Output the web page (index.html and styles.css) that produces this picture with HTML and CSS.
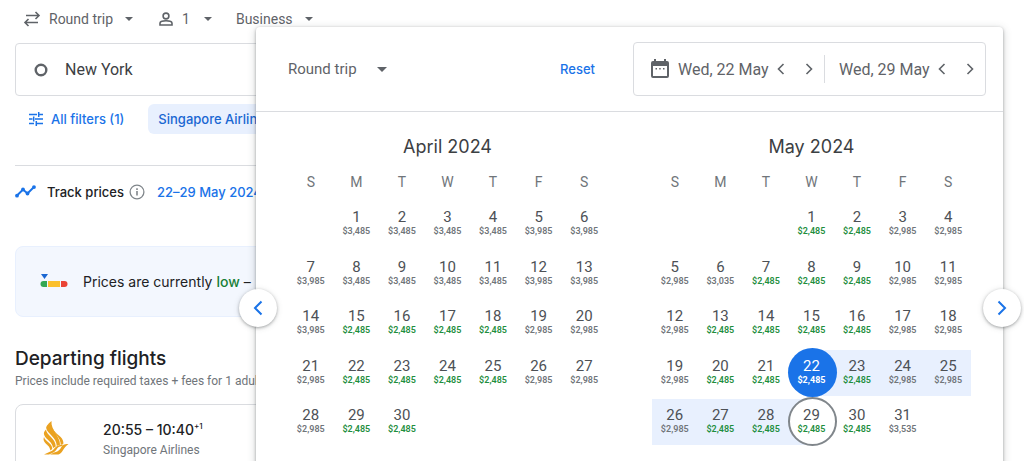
FILE: index.html
```html
<!DOCTYPE html>
<html lang="en">
<head>
<meta charset="utf-8">
<meta name="viewport" content="width=device-width, initial-scale=1">
<title>Flights</title>
<link rel="stylesheet" href="styles.css">
<script src="calendar.js" defer></script>
</head>
<body>
<main class="page">
  <div class="trip-bar">
    <label class="picker picker-trip">
      <svg class="icon-swap" width="18" height="16" viewBox="0 0 18 16" fill="none" stroke="currentColor" stroke-width="1.6"><path d="M3 4.5h13M12.5 1l3.5 3.5L12.500 8M15 11.500H2M5.500 8L2 11.500 5.500 15"/></svg>
      <select class="picker-select" aria-label="Trip type"><option>Round trip</option></select>
      <svg class="caret" width="8" height="4" viewBox="0 0 8 4"><path d="M0 0h8L4 4z" fill="currentColor"/></svg>
    </label>
    <label class="picker picker-people">
      <svg width="14" height="14" viewBox="0 0 14 14" fill="none" stroke="currentColor" stroke-width="1.600"><circle cx="7" cy="4" r="2.900"/><path d="M1 13v-1.800C1 9.400 4.500 8.700 7 8.700s6 .7 6 2.500V13z"/></svg>
      <select class="picker-select" aria-label="Passengers"><option>1</option></select>
      <svg class="caret" width="8" height="4" viewBox="0 0 8 4"><path d="M0 0h8L4 4z" fill="currentColor"/></svg>
    </label>
    <label class="picker picker-cabin">
      <select class="picker-select" aria-label="Cabin class"><option>Business</option></select>
      <svg class="caret" width="8" height="4" viewBox="0 0 8 4"><path d="M0 0h8L4 4z" fill="currentColor"/></svg>
    </label>
  </div>

  <label class="origin">
    <svg width="14" height="14" viewBox="0 0 14 14"><circle cx="7" cy="7" r="5.300" fill="none" stroke="currentColor" stroke-width="2.400"/></svg>
    <input class="origin-input" type="text" value="New York" aria-label="Where from?">
  </label>

  <div class="filters">
    <button class="filter" type="button">
      <svg width="14" height="14" viewBox="0 0 14 14" fill="none" stroke="currentColor" stroke-width="1.500"><path d="M0 2.500h8M10.500 2.500H14M9.700 0v5M0 7h3.500M6 7h8M4.700 4.500v5M0 11.500h5M7.500 11.500H14M7.300 9v5"/></svg>
      All filters (1)
    </button>
    <button class="filter filter-on" type="button">Singapore Airlines</button>
  </div>

  <section class="track">
    <svg width="21" height="13" viewBox="0 0 21 13" fill="currentColor"><path d="M2 10.500L8 4.500l4.500 4L19 2" fill="none" stroke="currentColor" stroke-width="2"/><circle cx="2" cy="10.700" r="1.900"/><circle cx="8" cy="4.500" r="1.900"/><circle cx="12.500" cy="8.500" r="1.900"/><circle cx="19" cy="2.100" r="1.900"/></svg>
    <span class="track-title">Track prices</span>
    <svg class="icon-info" width="16" height="16" viewBox="0 0 16 16"><circle cx="8" cy="8" r="6.900" fill="none" stroke="currentColor" stroke-width="1.300"/><path d="M7.200 7h1.600v4.500H7.200zM7.200 4.300h1.600v1.600H7.200z" fill="currentColor"/></svg>
    <span class="track-dates">22–29 May 2024</span>
  </section>

  <section class="insight">
    <svg width="28" height="16" viewBox="0 0 28 16"><path d="M1 0h7L4.500 5z" fill="#1a66d2"/><path d="M3.500 7H7v6H3.500a3 3 0 010-6z" fill="#34a853"/><path d="M8 7h12v6H8z" fill="#fbc02d"/><path d="M21 7h3.500a3 3 0 010 6H21z" fill="#ea4335"/></svg>
    <p class="insight-text">Prices are currently <span class="low">low</span> –</p>
  </section>

  <h1 class="heading">Departing flights</h1>
  <p class="note">Prices include required taxes + fees for 1 adult.</p>

  <article class="flight">
    <svg width="26" height="34" viewBox="0 0 26 34" fill="#eaa221"><path d="M8.500 0C4.500 3.500 2.800 5.500 3.300 7.500 4.500 13 13.500 16 13.800 25l3.200-1.200C17 15 7.500 9 8.500 0z"/><path d="M3 8.500C1 10.500.5 12 1.200 14c1.800 5 8.300 6.500 8.800 13l2.800-1.500C12.500 17 3.500 14.500 3 8.500z"/><path d="M9.800 7.500C10.500 13 17.800 16 17.800 24l2.700-1.500C20.500 15 12 13.500 9.800 7.500z"/><path d="M1 16C.2 18 .5 19.500 1.500 21c2 3 5.500 4 5.800 8.500l2-1.500C9 21.500 2.500 21 1 16z"/><path d="M1 33.500C7 30.500 9 30.500 11 28s4-4 9.500-4.500L19 25c-3 .5-4 1-5.500 3.500S9 32 6 33.500z"/><path d="M7 33.500h8.500c4.500-1.500 4.500-7 10-10.500-5 .2-6 1-8 4.500-1.500 2.500-4 3.500-6.500 4z"/></svg>
    <div class="flight-info">
      <p class="flight-time">20:55 – 10:40<sup class="plus">+1</sup></p>
      <p class="flight-line">Singapore Airlines</p>
    </div>
  </article>
</main>

<div class="dialog" role="dialog" aria-label="Choose dates">
  <header class="dialog-head">
    <label class="picker picker-large">
      <select class="picker-select" aria-label="Trip type"><option>Round trip</option></select>
      <svg class="caret" width="10" height="5" viewBox="0 0 10 5"><path d="M0 0h10L5 5z" fill="currentColor"/></svg>
    </label>
    <button class="reset" type="button">Reset</button>
    <div class="dates">
      <svg class="icon-calendar" width="18" height="20" viewBox="0 0 18 20"><path d="M3 0h2v2h8V0h2v2h1a2 2 0 012 2v13a2 2 0 01-2 2H2a2 2 0 01-2-2V4a2 2 0 012-2h1zM2 7v10h14V7z" fill="currentColor" fill-rule="evenodd"/><path d="M4.500 9h1.500v1.500H4.500zM8.200 9h1.500v1.500H8.200zM12 9h1.500v1.500H12z" fill="currentColor"/></svg>
      <div class="date">
        <input class="date-input" type="text" value="Wed, 22 May" aria-label="Departure">
        <button class="step" type="button" aria-label="Previous departure day"><svg width="8" height="12" viewBox="0 0 8 12"><path d="M6.500 1L1.500 6l5 5"/></svg></button>
        <button class="step" type="button" aria-label="Next departure day"><svg width="8" height="12" viewBox="0 0 8 12"><path d="M1.500 1l5 5-5 5"/></svg></button>
      </div>
      <div class="date date-return">
        <input class="date-input" type="text" value="Wed, 29 May" aria-label="Return">
        <button class="step" type="button" aria-label="Previous return day"><svg width="8" height="12" viewBox="0 0 8 12"><path d="M6.500 1L1.500 6l5 5"/></svg></button>
        <button class="step" type="button" aria-label="Next return day"><svg width="8" height="12" viewBox="0 0 8 12"><path d="M1.500 1l5 5-5 5"/></svg></button>
      </div>
    </div>
  </header>
  <div class="months">
    <table class="month" id="april"><caption class="month-name">April 2024</caption></table>
    <table class="month" id="may"><caption class="month-name">May 2024</caption></table>
  </div>
  <button class="pager pager-prev" type="button" aria-label="Previous month"><svg width="10" height="16" viewBox="0 0 10 16"><path d="M8.500 1.500L2 8l6.500 6.500"/></svg></button>
  <button class="pager pager-next" type="button" aria-label="Next month"><svg width="10" height="16" viewBox="0 0 10 16"><path d="M1.500 1.500L8 8l-6.500 6.500"/></svg></button>
</div>
</body>
</html>
```
FILE: styles.css
```css
*, ::before { box-sizing: border-box; }
body {
  margin: 0;
  position: relative;
  height: 100vh;
  overflow: hidden;
  background: #fff;
  color: #202124;
  font-family: Roboto, "Liberation Sans", sans-serif;
  font-size: 14px;
}
p, h1 { margin: 0; }
svg { display: block; flex: none; }
button, input, select {
  margin: 0;
  padding: 0;
  border: 0;
  background: none;
  color: inherit;
  font: inherit;
}
.page { padding: 8px 40px 0 15px; }

.trip-bar { display: flex; height: 22px; padding-left: 8px; color: #5f6368; }
.picker { display: flex; align-items: center; }
.picker-select { appearance: none; field-sizing: content; }
.picker .caret { margin-left: 12px; }
.picker-trip { gap: 8px; }
.picker-trip .caret { margin-left: 4px; }
.picker-people { gap: 9px; margin-left: 26px; }
.picker-people .caret { margin-left: 5px; }
.picker-cabin { margin-left: 24px; }

.origin {
  display: flex;
  align-items: center;
  gap: 17px;
  height: 53px;
  margin-top: 13px;
  padding: 0 18px;
  border: 1px solid #dadce0;
  border-radius: 4px;
  color: #5f6368;
}
.origin-input { flex: 1; color: #3c4043; font-size: 16px; }

.filters { display: flex; gap: 12px; margin-top: 8px; }
.filter {
  display: flex;
  align-items: center;
  gap: 8px;
  height: 30px;
  padding: 0 12px 0 14px;
  border-radius: 6px;
  color: #1a73e8;
  font: 500 13px Inter, sans-serif;
}
.filter-on { padding: 0 10px; background: #e8f0fe; color: #1967d2; }

.track {
  display: flex;
  align-items: center;
  height: 52px;
  margin-top: 31px;
  border-top: 1px solid #dadce0;
  color: #1a73e8;
  font: 500 13px Inter, sans-serif;
}
.track-title { margin-left: 11px; color: #202124; }
.icon-info { margin: 0 12px 0 5px; color: #80868b; }

.insight {
  display: flex;
  align-items: center;
  gap: 15px;
  height: 71px;
  margin-top: 29px;
  padding-left: 24px;
  border: 1px solid #e8f0fe;
  border-radius: 8px;
  background: #f3f7fe;
}
.insight-text { font: 14px Inter, sans-serif; }
.low { color: #188038; font-weight: 500; }

.heading { margin-top: 30px; font: 500 19px/24px Inter, sans-serif; }
.note { margin-top: 2px; color: #70757a; font-size: 12px; line-height: 16px; }
.flight {
  display: flex;
  align-items: flex-start;
  gap: 34px;
  height: 88px;
  margin-top: 15px;
  padding: 16px 27px;
  border: 1px solid #dadce0;
  border-radius: 8px;
}
.flight-time { font: 500 14px/18px Inter, sans-serif; }
.plus { font-size: 8px; line-height: 1px; }
.flight-line { margin-top: 3px; color: #70757a; font-size: 12px; line-height: 16px; }

.dialog {
  position: absolute;
  top: 27px;
  right: 21px;
  bottom: -16px;
  left: 256px;
  border-radius: 4px;
  background: #fff;
  box-shadow: 0 1px 3px rgba(60, 64, 67, .4), 0 2px 8px rgba(60, 64, 67, .25);
}
.dialog-head {
  display: flex;
  align-items: center;
  height: 85px;
  padding: 0 17px 0 32px;
  border-bottom: 1px solid #dadce0;
}
.picker-large { color: #5f6368; font-size: 15px; }
.picker-large .caret { margin-left: 20px; }
.reset {
  margin-left: auto;
  margin-right: 38px;
  color: #1a73e8;
  font: 500 13px Inter, sans-serif;
}
.dates {
  display: flex;
  align-items: center;
  height: 54px;
  padding: 0 11px 0 17px;
  border: 1px solid #dadce0;
  border-radius: 4px;
  color: #5f6368;
}
.date { display: flex; align-items: center; height: 28px; padding: 0 11px 0 9px; }
.date-return { padding: 0 0 0 14px; border-left: 1px solid #dadce0; }
.date-input { width: 99px; color: #5f6368; font-size: 16px; }
.step { display: flex; }
.step + .step { margin-left: 20px; }
.step svg { fill: none; stroke: currentColor; stroke-width: 1.6; }

.months {
  display: grid;
  grid-template-columns: 1fr 1fr;
  gap: 45px;
  padding: 23px 32px 0;
}
.month { width: 100%; height: min-content; table-layout: fixed; border-collapse: collapse; }
.month-name { color: #3c4043; font: 18px/24px Inter, sans-serif; }
.month th {
  height: 42px;
  padding: 4px 0 0;
  color: #70757a;
  font-size: 14px;
  font-weight: 400;
  vertical-align: middle;
}
.month td { height: 49px; padding: 0; vertical-align: top; }
.month tbody tr:nth-child(odd) td { height: 50px; }
.day {
  position: relative;
  z-index: 0;
  display: flex;
  flex-direction: column;
  align-items: center;
  justify-content: flex-start;
  width: 100%;
  height: 46px;
  padding-top: 8px;
  color: #4d5156;
}
.day-number { font-size: 15px; line-height: 16px; }
.day-price { color: #70757a; font-size: 9px; font-weight: 600; line-height: 13px; }
.cheap .day-price { color: #1e8e3e; }
.range { background: #e8f0fe; }
.start { z-index: 1; background: linear-gradient(90deg, transparent 50%, #e8f0fe 50%); }
.end { z-index: 1; background: linear-gradient(90deg, #e8f0fe 50%, transparent 50%); }
.start::before, .end::before {
  content: "";
  position: absolute;
  z-index: -1;
  top: 50%;
  left: 50%;
  width: 49px;
  height: 49px;
  margin: -25px 0 0 -23px;
  border-radius: 50%;
}
.start::before { background: #1a73e8; }
.end::before { border: 2px solid #80868b; background: #fff; }
.start, .start .day-price { color: #fff; }
.start .day-price { font-weight: 700; }

.pager {
  position: absolute;
  top: 262px;
  display: flex;
  align-items: center;
  justify-content: center;
  width: 38px;
  height: 38px;
  border-radius: 50%;
  background: #fff;
  box-shadow: 0 1px 3px rgba(60, 64, 67, .4), 0 1px 6px rgba(60, 64, 67, .15);
}
.pager svg { fill: none; stroke: #1a73e8; stroke-width: 2; }
.pager-prev { left: -17px; }
.pager-next { right: -18px; }
```
FILE: calendar.js
```js
const CHEAPEST = 2485;

const months = {
  april: {
    offset: 1,
    prices: [
      3485, 3485, 3485, 3485, 3985, 3985,
      3985, 3485, 3485, 3485, 3485, 3985, 3985,
      3985, 2485, 2485, 2485, 2485, 2985, 2985,
      2985, 2485, 2485, 2485, 2485, 2985, 2985,
      2985, 2485, 2485
    ]
  },
  may: {
    offset: 3,
    start: 22,
    end: 29,
    prices: [
      2485, 2485, 2985, 2985,
      2985, 3035, 2485, 2485, 2485, 2985, 2985,
      2985, 2485, 2485, 2485, 2485, 2985, 2985,
      2985, 2485, 2485, 2485, 2485, 2985, 2985,
      2985, 2485, 2485, 2485, 2485, 3535
    ]
  }
};

function dayClass(day, price, month) {
  const names = ["day"];
  if (price === CHEAPEST) names.push("cheap");
  if (day === month.start) names.push("start");
  else if (day === month.end) names.push("end");
  else if (day > month.start && day < month.end) names.push("range");
  return names.join(" ");
}

function renderMonth(id, month) {
  const table = document.getElementById(id);
  const headRow = table.createTHead().insertRow();
  for (const letter of "SMTWTFS") {
    const th = document.createElement("th");
    th.scope = "col";
    th.textContent = letter;
    headRow.append(th);
  }
  const body = table.createTBody();
  for (let cell = 0; cell < 35; cell++) {
    if (cell % 7 === 0) body.insertRow();
    const td = body.lastElementChild.insertCell();
    const day = cell - month.offset + 1;
    const price = month.prices[day - 1];
    if (!price) continue;
    td.innerHTML =
      `<button type="button" class="${dayClass(day, price, month)}">` +
      `<span class="day-number">${day}</span>` +
      `<span class="day-price">$${price.toLocaleString("en-US")}</span></button>`;
  }
}

for (const [id, month] of Object.entries(months)) renderMonth(id, month);
```
